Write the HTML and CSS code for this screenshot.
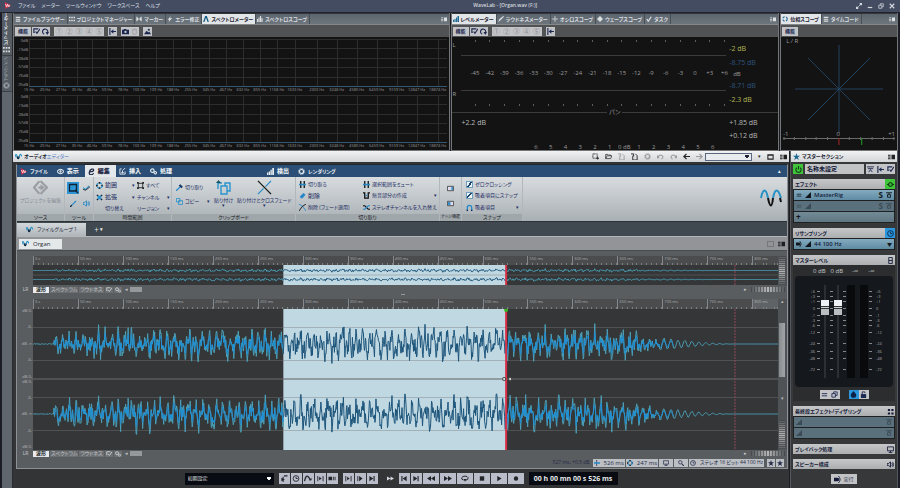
FILE: index.html
```html
<!DOCTYPE html>
<html lang="ja">
<head>
    <meta charset="utf-8">
    <meta name="viewport" content="width=device-width, initial-scale=1">
    <title>WaveLab - [Organ.wav (F:)]</title>
    <link rel="stylesheet" href="styles.css">
    <script src="script.js" defer></script>
</head>
<body>
    <!-- アイコン定義 -->
    <svg class="sprite" aria-hidden="true">
        <symbol id="logo" viewBox="0 0 10 10"><path d="M1 0l9 5-8 5z" fill="#d22f4a"/><path d="M2 3l2 4 1-4 2 4 1-3" fill="none" stroke="#fff"/></symbol>
        <symbol id="wave" viewBox="0 0 10 8"><path d="M0 5C1 0 2 0 3 4s2 4 3 0 2-4 4 0" fill="none" stroke="#2791c4" stroke-width="1.6"/><path d="M3 4c1 4 2 4 3 0" fill="none" stroke="#123" stroke-width="1.6"/></symbol>
        <symbol id="list" viewBox="0 0 8 8"><path d="M1 1h6v1.500H1zM1 3.500h6V5H1zM1 6h6v1.500H1z" fill="currentColor"/></symbol>
        <symbol id="grid" viewBox="0 0 8 8"><path d="M0 1h2v2H0zM3 1h2v2H3zM6 1h2v2H6zM0 5h2v2H0zM3 5h2v2H3zM6 5h2v2H6z" fill="currentColor"/></symbol>
        <symbol id="menu" viewBox="0 0 8 8"><path d="M0 2h3v1H0zM0 4h3v1H0zM0 6h3v1H0zM4 2h4v5H4z" fill="currentColor"/></symbol>
        <symbol id="marker" viewBox="0 0 8 8"><path d="M1 1v6M7 1v6" stroke="currentColor"/><path d="M1 1l3 3-3 3zM7 1L4 4l3 3z" fill="currentColor"/></symbol>
        <symbol id="bolt" viewBox="0 0 8 8"><path d="M5 0L1 5h2L2 8l5-5H4z" fill="currentColor"/></symbol>
        <symbol id="peak" viewBox="0 0 8 8"><path d="M1 8L3.500 1h1L7 8" fill="none" stroke="#145c84" stroke-width="1.700"/></symbol>
        <symbol id="bars" viewBox="0 0 8 8"><path d="M0 5h1.500v3H0zM2 4h1.500v4H2zM4 2h1.500v6H4zM6 0h2v8H6z" fill="currentColor"/></symbol>
        <symbol id="bars2" viewBox="0 0 8 8"><path d="M0 4h1.500v4H0zM2 2h1.500v6H2zM4 0h1.500v8H4zM6 3h1.500v5H6z" fill="currentColor"/></symbol>
        <symbol id="brush" viewBox="0 0 8 8"><path d="M0 8l2-4 5-4 1 1-5 5z" fill="currentColor"/></symbol>
        <symbol id="target" viewBox="0 0 8 8"><circle cx="4" cy="4" r="3" fill="none" stroke="currentColor" stroke-width="1.500" stroke-dasharray="3 1.700"/></symbol>
        <symbol id="osc" viewBox="0 0 8 8"><path d="M4 0l1.300 2H2.700zM4 8l1.300-2H2.700zM0 4l2-1.300v2.600zM8 4L6 2.700v2.600zM3 3h2v2H3z" fill="currentColor"/></symbol>
        <symbol id="dot" viewBox="0 0 8 8"><path d="M0 4l4-4 4 4-4 4z" fill="currentColor"/></symbol>
        <symbol id="check" viewBox="0 0 8 8"><path d="M1 4l2 3 4-6" fill="none" stroke="currentColor" stroke-width="1.700"/></symbol>
        <symbol id="editcheck" viewBox="0 0 8 8"><path d="M6 1H1v4h1M3 4l1.500 2L8 1" fill="none" stroke="currentColor" stroke-width="1.300"/></symbol>
        <symbol id="loop" viewBox="0 0 8 8"><path d="M2.500 7A3 3 0 1 1 6 6" fill="none" stroke="currentColor" stroke-width="1.300"/><path d="M4 4.500h4L6 8z" fill="currentColor"/></symbol>
        <symbol id="into" viewBox="0 0 8 8"><path d="M1 0v8M3 4h5" stroke="currentColor" stroke-width="1.300"/><path d="M2 4l3-2.500v5z" fill="currentColor"/></symbol>
        <symbol id="camera" viewBox="0 0 8 8"><path d="M0 2h2V1h3v1h3v5H0z" fill="currentColor"/><circle cx="4" cy="4.500" r="1.300" fill="#ccc"/></symbol>
        <symbol id="trash" viewBox="0 0 8 8"><path d="M1 2h6M3 1h2M2 2v5h4V2" fill="none" stroke="currentColor"/></symbol>
        <symbol id="scene" viewBox="0 0 8 8"><path d="M0 7l3-4 2 2 1-1 2 3z" fill="currentColor"/><circle cx="5.500" cy="2" r="1.200" fill="currentColor"/></symbol>
        <symbol id="eye" viewBox="0 0 8 8"><path d="M0 4q4-5 8 0-4 5-8 0z" fill="none" stroke="currentColor" stroke-width="1.200"/><circle cx="4" cy="4" r="1.300" fill="currentColor"/></symbol>
        <symbol id="edit" viewBox="0 0 8 8"><path d="M6.500 2.500C6.500 0 2 1 1.500 5S5 8 6.500 6M2 4.500q4 0 4.500-2" fill="none" stroke="currentColor" stroke-width="1.400"/></symbol>
        <symbol id="insert" viewBox="0 0 8 8"><path d="M3 1H1v6h6V4M7 0L4 3v3M2.500 4.500L4 6l1.500-1.500" fill="none" stroke="currentColor"/></symbol>
        <symbol id="gears" viewBox="0 0 8 8"><circle cx="2.700" cy="3" r="2" fill="none" stroke="currentColor" stroke-width="1.300"/><circle cx="6" cy="5.500" r="1.400" fill="none" stroke="currentColor" stroke-width="1.200"/></symbol>
        <symbol id="gear" viewBox="0 0 8 8"><circle cx="4" cy="4" r="2.300" fill="none" stroke="currentColor" stroke-width="1.300"/><circle cx="4" cy="4" r="3.500" fill="none" stroke="currentColor" stroke-dasharray="1.300 1.400"/></symbol>
        <symbol id="diamond" viewBox="0 0 14 14"><path d="M6 1L1 7l5 6M7 1l6 6-6 6" fill="none" stroke="#9a9ea2" stroke-width="2"/><path d="M5 6h2V4l4 3-4 3V8H5z" fill="#9a9ea2"/></symbol>
        <symbol id="select" viewBox="0 0 12 12"><path d="M0 0h12v12H0z" fill="#2d95d6"/><path d="M2.500 2.500h7V9h-7zM8 8l3 3" fill="none" stroke="#123" stroke-width="1.300"/></symbol>
        <symbol id="draw" viewBox="0 0 8 8"><path d="M0 3l3 2 4-4" fill="none" stroke="#2791c4" stroke-width="1.200"/><path d="M0 5l3 1 5-4" fill="none" stroke="#223"/></symbol>
        <symbol id="pen" viewBox="0 0 8 8"><path d="M1 7l6-6" stroke="#2589c8" stroke-width="1.500"/><path d="M0 8l2-2" stroke="#123" stroke-width="1.300"/></symbol>
        <symbol id="speaker" viewBox="0 0 8 8"><path d="M0 3h1.500L4 1v6L1.500 5H0zM5.500 2.500q1.300 1.500 0 3M6.500 1.300q2 2.700 0 5.400" fill="none" stroke="currentColor"/></symbol>
        <symbol id="range" viewBox="0 0 8 8"><path d="M4 0v2M4 6v2M0 4h2M6 4h2" stroke="#111" stroke-width="2"/><circle cx="4" cy="4" r="3" fill="none" stroke="#2d95d6" stroke-width="1.500" stroke-dasharray="2.700 2"/></symbol>
        <symbol id="expand" viewBox="0 0 8 8"><path d="M1 1l6 6M7 1L1 7" stroke="#123" stroke-width="1.600"/><path d="M2 2h4v4H2z" fill="#2d95d6"/></symbol>
        <symbol id="all" viewBox="0 0 8 8"><path d="M1.500 1.500h5v5h-5z" fill="none" stroke="#222"/><path d="M0 0h2v2H0zM6 0h2v2H6zM0 6h2v2H0zM6 6h2v2H6z" fill="#222"/></symbol>
        <symbol id="cutpen" viewBox="0 0 8 8"><path d="M0 8l5-5" stroke="#2589c8" stroke-width="1.500"/><path d="M4 1l3 3" stroke="#136" stroke-width="2.400"/></symbol>
        <symbol id="copy" viewBox="0 0 8 8"><path d="M.5.5h4v4h-4zM3 3h4.500v4.500H3z" fill="none" stroke="#2b94c9"/></symbol>
        <symbol id="paste" viewBox="0 0 15 15"><path d="M5 6h6v8H5zM9 6V3h5v8h-3" fill="none" stroke="#2994ce" stroke-width="1.400"/><path d="M2 9V3h4" fill="none" stroke="#2994ce" stroke-width="1.400"/><path d="M0 3l2.500-3L5 3z" fill="#156"/></symbol>
        <symbol id="cross" viewBox="0 0 16 16"><path d="M1 1l14 14" stroke="#111" stroke-width="1.300"/><path d="M15 1L9 7M7 9l-6 6" stroke="#2589c8" stroke-width="1.300"/></symbol>
        <symbol id="trim" viewBox="0 0 8 8"><path d="M2 0v8M6 0v8" stroke="#111" stroke-width="1.500"/><path d="M0 4h8" stroke="#2589c8" stroke-width="1.800"/></symbol>
        <symbol id="erase" viewBox="0 0 8 8"><path d="M1 5l4-4 2.500 2L4 7H2z" fill="#2589c8"/></symbol>
        <symbol id="fade" viewBox="0 0 8 8"><path d="M0 0q5 2 8 8" fill="none" stroke="#2589c8"/><path d="M8 0Q3 2 0 8" fill="none" stroke="#111"/></symbol>
        <symbol id="silence" viewBox="0 0 8 8"><path d="M0 1h2v6h4V1h2" fill="none" stroke="#111" stroke-width="1.500"/><path d="M3 4h2" stroke="#2589c8" stroke-width="1.500"/></symbol>
        <symbol id="swap" viewBox="0 0 8 8"><path d="M0 2h2l4 4h2" fill="none" stroke="#111" stroke-width="1.300"/><path d="M0 6h2l4-4h2" fill="none" stroke="#2589c8" stroke-width="1.300"/></symbol>
        <symbol id="nudger" viewBox="0 0 8 6"><path d="M.5.5h7v5h-7z" fill="#dde" stroke="#444"/><path d="M5 1.500h2v3H5z" fill="#2589c8"/></symbol>
        <symbol id="nudgel" viewBox="0 0 8 6"><path d="M.5.5h7v5h-7z" fill="#dde" stroke="#444"/><path d="M1 1.500h3v3H1z" fill="#2589c8"/></symbol>
        <symbol id="magnet" viewBox="0 0 8 8"><path d="M1.500 8V4a2.500 2.500 0 0 1 5 0v4" fill="none" stroke="#2589c8" stroke-width="1.500"/><path d="M1.500 8V6.500M6.500 8V6.500" stroke="#124" stroke-width="1.500"/></symbol>
        <symbol id="folder" viewBox="0 0 10 8"><path d="M1 7V1h3l1 1h3v1M1 7l2-4h7L8 7z" fill="none" stroke="currentColor"/></symbol>
        <symbol id="newfile" viewBox="0 0 8 8"><path d="M1 1h5v5H1z" fill="none" stroke="currentColor" stroke-dasharray="1 .5"/><path d="M5 6h3M6.500 4.500v3" stroke="currentColor"/></symbol>
        <symbol id="doc" viewBox="0 0 8 8"><path d="M2 3v5h5V3L5 1M0 1h3v3" fill="none" stroke="currentColor"/></symbol>
        <symbol id="undo" viewBox="0 0 8 8"><path d="M1 5q2-4 5-2 2 2-1 4" fill="none" stroke="currentColor" stroke-width="1.200"/><path d="M0 2v4h3z" fill="currentColor"/></symbol>
        <symbol id="redo" viewBox="0 0 8 8"><path d="M7 5Q5 1 2 3 0 5 3 7" fill="none" stroke="currentColor" stroke-width="1.200"/><path d="M8 2v4H5z" fill="currentColor"/></symbol>
        <symbol id="left" viewBox="0 0 8 8"><path d="M8 4H1M4 1L1 4l3 3" fill="none" stroke="currentColor" stroke-width="1.400"/></symbol>
        <symbol id="right" viewBox="0 0 8 8"><path d="M0 4h7M4 1l3 3-3 3" fill="none" stroke="currentColor" stroke-width="1.400"/></symbol>
        <symbol id="window" viewBox="0 0 8 8"><path d="M1 2h6v5H1zM1 2.500h6" fill="none" stroke="currentColor" stroke-width="1.200"/></symbol>
        <symbol id="minimize" viewBox="0 0 8 8"><path d="M1 6h6" stroke="currentColor" stroke-width="1.600"/></symbol>
        <symbol id="restore" viewBox="0 0 8 8"><path d="M1 3h4v4H1zM3 3V1h4v4H5" fill="none" stroke="currentColor"/></symbol>
        <symbol id="close" viewBox="0 0 8 8"><path d="M1 1l6 6M7 1L1 7" stroke="currentColor" stroke-width="1.500"/></symbol>
        <symbol id="full" viewBox="0 0 8 8"><path d="M5 0h3v3H5zM0 5h3v3H0z" fill="currentColor"/><path d="M3 5l2-2" stroke="currentColor"/></symbol>
        <symbol id="star" viewBox="0 0 8 8"><path d="M4 0l1 3h3L5.600 5l1 3L4 6.200 1.400 8l1-3L0 3h3z" fill="currentColor"/></symbol>
        <symbol id="power" viewBox="0 0 8 8"><path d="M4 0v4M2 2a3 3 0 1 0 4 0" fill="none" stroke="currentColor" stroke-width="1.200"/></symbol>
        <symbol id="bypass" viewBox="0 0 8 8"><path d="M0 1h8M2 3.500h4V7H2zM4 1v2" fill="none" stroke="currentColor" stroke-width="1.200"/></symbol>
        <symbol id="merge" viewBox="0 0 8 8"><path d="M0 1h8M1 3h6M2 7l2-3 2 3" fill="none" stroke="currentColor"/></symbol>
        <symbol id="equal" viewBox="0 0 8 8"><path d="M1 3h6M1 5.500h6" stroke="currentColor"/></symbol>
        <symbol id="ramp" viewBox="0 0 8 8"><path d="M0 8l8-8v8z" fill="currentColor"/></symbol>
        <symbol id="node" viewBox="0 0 8 8"><path d="M0 4h2M6 4h2" stroke="currentColor" stroke-width="1.300"/><path d="M3 2h2l1 1v2L5 6H3L2 5V3z" fill="none" stroke="currentColor" stroke-width="1.300"/></symbol>
        <symbol id="clock" viewBox="0 0 8 8"><circle cx="4" cy="4" r="3.300" fill="none" stroke="currentColor"/><path d="M4 2v2h2" fill="none" stroke="currentColor"/></symbol>
        <symbol id="render" viewBox="0 0 8 8"><path d="M0 2h4a2 2 0 0 1 0 4H0z" fill="currentColor"/><path d="M5 0q4 4 0 8M0 4h3" fill="none" stroke="currentColor"/></symbol>
        <symbol id="box" viewBox="0 0 8 8"><path d="M2 .5h4v7H2zM2 4h4" fill="none" stroke="currentColor"/></symbol>
        <symbol id="drop" viewBox="0 0 8 8"><path d="M4 0q5 5 2 7.300-2 1-4 0Q-1 5 4 0z" fill="currentColor"/></symbol>
        <symbol id="lock" viewBox="0 0 8 8"><path d="M1 3.500h6V8H1z" fill="currentColor"/><path d="M2.500 4V1h3v1.500" fill="none" stroke="currentColor"/></symbol>
        <symbol id="monitor" viewBox="0 0 8 8"><path d="M.5 1h7v4.500h-7zM4 5.500V7M2 7.500h4" fill="none" stroke="currentColor"/></symbol>
        <symbol id="squares" viewBox="0 0 8 8"><path d="M1 1h2.500v2.500H1zM5 1h2.500v2.500H5zM1 5h2.500v2.500H1zM5 5h2.500v2.500H5z" fill="currentColor"/></symbol>
        <symbol id="search" viewBox="0 0 8 8"><circle cx="3" cy="3" r="2.300" fill="none" stroke="currentColor"/><path d="M5 5l3 3" stroke="currentColor" stroke-width="1.400"/></symbol>
        <symbol id="caret" viewBox="0 0 8 8"><path d="M3.500 0v8" stroke="currentColor"/><path d="M0 4h8" stroke="#2589c8" stroke-width="2"/></symbol>
        <symbol id="play" viewBox="0 0 8 8"><path d="M2 1l5 3-5 3z" fill="currentColor"/></symbol>
        <symbol id="stop" viewBox="0 0 8 8"><path d="M1.500 1.500h5v5h-5z" fill="currentColor"/></symbol>
        <symbol id="rec" viewBox="0 0 8 8"><circle cx="4" cy="4" r="2.500" fill="currentColor"/></symbol>
        <symbol id="rew" viewBox="0 0 10 8"><path d="M5 1v6L0 4zM10 1v6L5 4z" fill="currentColor"/></symbol>
        <symbol id="fwd" viewBox="0 0 10 8"><path d="M0 1v6l5-3zM5 1v6l5-3z" fill="currentColor"/></symbol>
        <symbol id="prev" viewBox="0 0 8 8"><path d="M7 1v6L2.500 4zM1 1h1.300v6H1z" fill="currentColor"/></symbol>
        <symbol id="next" viewBox="0 0 8 8"><path d="M1 1v6l4.500-3zM5.700 1H7v6H5.700z" fill="currentColor"/></symbol>
        <symbol id="barplay" viewBox="0 0 8 8"><path d="M1 1h1v6H1zM3 2l3 2-3 2zM7 1h1v6H7z" fill="currentColor"/></symbol>
        <symbol id="fromplay" viewBox="0 0 8 8"><path d="M1 1h1v6H1zM3 1l4 3-4 3z" fill="currentColor"/></symbol>
        <symbol id="cycle" viewBox="0 0 10 8"><path d="M3 6Q0 5 1 3q1-2 4-2t4 2q0 3-3 3" fill="none" stroke="currentColor" stroke-width="1.200"/><path d="M3 4.500h4L5 8z" fill="currentColor"/></symbol>
        <symbol id="start" viewBox="0 0 8 8"><path d="M4 1h4M3 2v6" fill="none" stroke="currentColor" stroke-width="1.200"/><path d="M1 3l4 2-4 2z" fill="currentColor"/></symbol>
        <symbol id="arc" viewBox="0 0 8 8"><path d="M0 7q2-9 5-4l2 3" fill="none" stroke="currentColor" stroke-width="1.500"/><path d="M5 6h3V3z" fill="currentColor"/></symbol>
        <symbol id="block" viewBox="0 0 8 8"><path d="M0 2h4v4H0zM5 2h1v4H5zM7 2h1v4H7z" fill="currentColor"/></symbol>
    </svg>

    <header class="titlebar">
        <svg class="icon"><use href="#logo"/></svg>
        <nav class="menubar">
            <a href="#">ファイル</a><a href="#">メーター</a><a href="#">ツールウィンドウ</a><a href="#">ワークスペース</a><a href="#">ヘルプ</a>
        </nav>
        <h1 class="app-title">WaveLab - [Organ.wav (F:)]</h1>
        <div class="window-controls">
            <button aria-label="全画面"><svg class="icon"><use href="#full"/></svg></button>
            <button aria-label="最小化"><svg class="icon"><use href="#minimize"/></svg></button>
            <button aria-label="元に戻す"><svg class="icon"><use href="#restore"/></svg></button>
            <button aria-label="閉じる"><svg class="icon"><use href="#close"/></svg></button>
        </div>
    </header>

    <div class="workspace">
        <aside class="side-tabs">
            <button class="side-tab side-tab-on"><svg class="icon"><use href="#grid"/></svg>ビットメーター</button>
            <button class="side-tab"><svg class="icon"><use href="#gear"/></svg>プラグイン</button>
        </aside>

        <div class="desk">
            <div class="meters">
                <!-- スペクトロメーター -->
                <section class="panel">
                    <div class="tabs">
                        <button class="tab"><svg class="icon"><use href="#list"/></svg>ファイルブラウザー</button>
                        <button class="tab"><svg class="icon"><use href="#grid"/></svg>プロジェクトマネージャー</button>
                        <button class="tab"><svg class="icon"><use href="#marker"/></svg>マーカー</button>
                        <button class="tab"><svg class="icon"><use href="#bolt"/></svg>エラー修正</button>
                        <button class="tab tab-on"><svg class="icon"><use href="#peak"/></svg>スペクトロメーター</button>
                        <button class="tab"><svg class="icon"><use href="#bars2"/></svg>スペクトロスコープ</button>
                        <button class="tab-menu" aria-label="メニュー"><svg class="icon"><use href="#menu"/></svg></button>
                    </div>
                    <div class="toolbar">
                        <button class="func">機能</button>
                        <div class="chips"><button aria-label="設定"><svg class="icon"><use href="#editcheck"/></svg></button><button aria-label="更新"><svg class="icon"><use href="#loop"/></svg></button></div>
                        <div class="chips presets"><button>①</button><button>②</button><button>③</button><button>④</button><button>⑤</button></div>
                        <div class="chips"><button aria-label="リセット"><svg class="icon"><use href="#into"/></svg></button></div>
                        <div class="chips"><button aria-label="スナップショット"><svg class="icon"><use href="#camera"/></svg></button><button class="dim" aria-label="消去"><svg class="icon"><use href="#trash"/></svg></button></div>
                        <div class="chips"><button aria-label="画像"><svg class="icon"><use href="#scene"/></svg></button></div>
                    </div>
                    <div class="screen spectrometer">
                        <div class="spectrum"></div>
                        <div class="spectrum"></div>
                    </div>
                </section>

                <!-- レベルメーター -->
                <section class="panel">
                    <div class="tabs">
                        <button class="tab tab-on"><svg class="icon blue"><use href="#bars"/></svg>レベルメーター</button>
                        <button class="tab"><svg class="icon"><use href="#brush"/></svg>ラウドネスメーター</button>
                        <button class="tab"><svg class="icon"><use href="#osc"/></svg>オシロスコープ</button>
                        <button class="tab"><svg class="icon"><use href="#dot"/></svg>ウェーブスコープ</button>
                        <button class="tab"><svg class="icon"><use href="#check"/></svg>タスク</button>
                        <button class="tab-menu" aria-label="メニュー"><svg class="icon"><use href="#menu"/></svg></button>
                    </div>
                    <div class="toolbar">
                        <button class="func">機能</button>
                        <div class="chips"><button aria-label="設定"><svg class="icon"><use href="#editcheck"/></svg></button><button aria-label="更新"><svg class="icon"><use href="#loop"/></svg></button></div>
                        <div class="chips presets"><button>①</button><button>②</button><button>③</button><button>④</button><button>⑤</button></div>
                        <div class="chips"><button aria-label="リセット"><svg class="icon"><use href="#into"/></svg></button></div>
                    </div>
                    <div class="screen level">
                        <div class="level-main">
                            <div class="level-sides"><span>L</span><span>R</span></div>
                            <div class="level-scale">
                                <div class="dots"></div>
                                <div class="level-numbers"></div>
                                <div class="dots"></div>
                            </div>
                            <div class="level-values">
                                <span class="yellow">-2 dB</span>
                                <span class="navy">-8.75 dB</span>
                                <span class="unit">dB</span>
                                <span class="navy">-8.71 dB</span>
                                <span class="yellow">-2.3 dB</span>
                            </div>
                        </div>
                        <div class="pan-rule"><span>パン</span></div>
                        <div class="pan-values">
                            <span>+2.2 dB</span>
                            <div><span>+1.85 dB</span><span>+0.12 dB</span></div>
                        </div>
                        <div class="pan-numbers"></div>
                    </div>
                </section>

                <!-- 位相スコープ -->
                <section class="panel">
                    <div class="tabs">
                        <button class="tab tab-on"><svg class="icon blue"><use href="#target"/></svg>位相スコープ</button>
                        <button class="tab"><svg class="icon"><use href="#list"/></svg>タイムコード</button>
                        <button class="tab-menu" aria-label="メニュー"><svg class="icon"><use href="#menu"/></svg></button>
                    </div>
                    <div class="toolbar"><button class="func">機能</button></div>
                    <div class="screen phase">
                        <span class="phase-lr">L / R</span>
                        <svg class="phase-plot" viewBox="-45 -45 90 90"><path d="M-44 0h88M0-44v88M-31-31l62 62M31-31l-62 62"/></svg>
                        <div class="phase-numbers"><span>-1</span><span>0</span><span>+1</span></div>
                        <svg class="phase-scale" viewBox="0 0 108 9" preserveAspectRatio="none">
                            <path d="M0 1.500h108M1 0v3M11 0v3M22 0v3M32 0v3M43 0v3M64 0v3M75 0v3M86 0v3M97 0v3M107 0v3" stroke="#6a6a6a"/>
                            <path d="M54 1v7" stroke="#a32626"/><path d="M76 1v7" stroke="#1f9a28"/>
                        </svg>
                    </div>
                </section>
            </div>

            <div class="lower">
                <main class="editor">
                    <div class="pane-title">
                        <svg class="icon"><use href="#wave"/></svg>
                        <h2>オーディオ<span>エディター</span></h2>
                        <div class="quick">
                            <button aria-label="新規"><svg class="icon"><use href="#newfile"/></svg></button>
                            <button aria-label="開く"><svg class="icon"><use href="#folder"/></svg></button>
                            <button class="dim" aria-label="保存"><svg class="icon"><use href="#doc"/></svg></button>
                            <button aria-label="別名で保存"><svg class="icon"><use href="#doc"/></svg></button>
                            <button class="dim" aria-label="情報"><svg class="icon"><use href="#gear"/></svg></button>
                            <button class="dim" aria-label="元に戻す"><svg class="icon"><use href="#undo"/></svg></button>
                            <button class="dim" aria-label="やり直し"><svg class="icon"><use href="#redo"/></svg></button>
                            <button aria-label="戻る"><svg class="icon"><use href="#left"/></svg></button>
                            <button class="dim" aria-label="進む"><svg class="icon"><use href="#right"/></svg></button>
                            <select class="jump" aria-label="ジャンプ先"><option></option></select>
                            <button aria-label="一覧">▾</button>
                            <button aria-label="ウィンドウ"><svg class="icon"><use href="#window"/></svg></button>
                            <button aria-label="メニュー"><svg class="icon"><use href="#menu"/></svg></button>
                        </div>
                    </div>

                    <div class="editor-frame">
                        <div class="ribbon-tabs">
                            <button><svg class="icon"><use href="#logo"/></svg>ファイル</button>
                            <button><svg class="icon"><use href="#eye"/></svg><b>表示</b></button>
                            <button class="ribbon-on"><svg class="icon"><use href="#edit"/></svg><b>編集</b></button>
                            <button><svg class="icon"><use href="#insert"/></svg><b>挿入</b></button>
                            <button><svg class="icon"><use href="#gears"/></svg><b>処理</b></button>
                            <button class="ribbon-gap"><svg class="icon"><use href="#bars"/></svg><b>検出</b></button>
                            <button><svg class="icon"><use href="#gear"/></svg>レンダリング</button>
                            <button class="ribbon-fold" aria-label="リボンを閉じる">▴</button>
                        </div>

                        <div class="ribbon">
                            <div class="group group-source">
                                <div class="group-body"><button class="big dim"><svg class="big-icon"><use href="#diamond"/></svg>プロジェクトを編集</button></div>
                                <div class="group-name">ソース</div>
                            </div>
                            <div class="group group-tools">
                                <div class="group-body tool-grid">
                                    <button aria-label="範囲選択"><svg class="tool-icon"><use href="#select"/></svg></button>
                                    <button aria-label="描画"><svg class="icon"><use href="#draw"/></svg></button>
                                    <button aria-label="ペン"><svg class="icon"><use href="#pen"/></svg></button>
                                    <button class="sky" aria-label="試聴"><svg class="icon"><use href="#speaker"/></svg></button>
                                </div>
                                <div class="group-name">ツール</div>
                            </div>
                            <div class="group group-range">
                                <div class="group-body range-grid">
                                    <button><svg class="icon"><use href="#range"/></svg><b>範囲</b></button><i>▾</i><button><svg class="icon"><use href="#all"/></svg>すべて</button><i></i>
                                    <button><svg class="icon"><use href="#expand"/></svg><b>拡張</b></button><i>▾</i><button>チャンネル</button><i>▾</i>
                                    <button class="indent">切り替え</button><i></i><button>リージョン</button><i>▾</i>
                                </div>
                                <div class="group-name">時間範囲</div>
                            </div>
                            <div class="group group-clip">
                                <div class="group-body clip-row">
                                    <div class="clip-small">
                                        <button><svg class="icon"><use href="#cutpen"/></svg>切り取り</button>
                                        <button><svg class="icon"><use href="#copy"/></svg>コピー<i>▾</i></button>
                                    </div>
                                    <button class="big"><svg class="big-icon"><use href="#paste"/></svg>貼り付け<i>▾</i></button>
                                    <button class="big"><svg class="big-icon"><use href="#cross"/></svg>貼り付けとクロスフェード<i>▾</i></button>
                                </div>
                                <div class="group-name">クリップボード</div>
                            </div>
                            <div class="group group-cut">
                                <div class="group-body cut-grid">
                                    <button><svg class="icon"><use href="#trim"/></svg>切り取る</button><button><svg class="icon"><use href="#trim"/></svg>選択範囲をミュート</button>
                                    <button><svg class="icon"><use href="#erase"/></svg><b>削除</b></button><button><svg class="icon"><use href="#silence"/></svg>無音部分の作成<i>▾</i></button>
                                    <button><svg class="icon"><use href="#fade"/></svg>削除 (フェード適用)</button><button><svg class="icon"><use href="#swap"/></svg>ステレオチャンネルを入れ替え</button>
                                </div>
                                <div class="group-name">切り取り</div>
                            </div>
                            <div class="group group-nudge">
                                <div class="group-body nudge">
                                    <button aria-label="右へナッジ"><svg class="icon"><use href="#nudger"/></svg></button>
                                    <button aria-label="左へナッジ"><svg class="icon"><use href="#nudgel"/></svg></button>
                                </div>
                                <div class="group-name">ナッジ機能</div>
                            </div>
                            <div class="group group-snap">
                                <div class="group-body snap">
                                    <label><input type="checkbox" checked>ゼロクロッシング</label>
                                    <label><input type="checkbox" checked>吸着項目にスナップ</label>
                                    <button><svg class="icon"><use href="#magnet"/></svg>吸着項目<i>▾</i></button>
                                </div>
                                <div class="group-name">スナップ</div>
                            </div>
                            <svg class="brand" viewBox="0 0 22 18"><path d="M1 9C3-1 6-1 8 9M13 9c2-10 5-10 8 0" stroke="#2691c6"/><path d="M8 9c2 10 4 10 5 0M20 9l1 4" stroke="#111"/></svg>
                        </div>

                        <div class="file-groups">
                            <button class="file-group"><svg class="icon"><use href="#wave"/></svg>ファイルグループ 1</button>
                            <button class="add-group">＋ ▾</button>
                        </div>
                        <div class="file-tabs">
                            <button class="file-tab"><svg class="icon"><use href="#wave"/></svg>Organ</button>
                            <span class="empty-box"></span>
                            <button aria-label="メニュー"><svg class="icon"><use href="#menu"/></svg></button>
                        </div>

                        <div class="montage">
                            <!-- 全体表示 -->
                            <div class="view overview">
                                <div></div>
                                <div class="track">
                                    <div class="ruler"></div>
                                    <svg class="waves" id="overview-wave" viewBox="0 0 744 20" preserveAspectRatio="none"></svg>
                                </div>
                                <div class="vscroll"><span class="wheel"></span></div>
                            </div>
                            <div class="view-tabs">
                                <span>LR</span><button class="view-on">波形</button><button>スペクトラム</button><button>ラウドネス</button><button aria-label="設定"><svg class="icon"><use href="#editcheck"/></svg></button><button aria-label="同期"><svg class="icon"><use href="#gears"/></svg></button><span class="hscroll">◂<span class="hthumb"></span></span><span>▸</span><span class="wheel-h"></span>
                            </div>
                            <div class="splitter"><span></span></div>
                            <!-- メイン表示 -->
                            <div class="view mainview">
                                <div class="db-labels">
                                    <div><span>dB 0-</span><span>-6-</span><span>dB -∞</span><span>-6-</span><span>dB 0-</span></div>
                                    <div><span>dB 0-</span><span>-6-</span><span>dB -∞</span><span>-6-</span><span>dB 0-</span></div>
                                </div>
                                <div class="track">
                                    <div class="ruler ruler-main"></div>
                                    <svg class="waves" id="main-wave" viewBox="0 0 744 141" preserveAspectRatio="none"></svg>
                                </div>
                                <div class="vscroll"><span>▴</span><span class="vthumb"></span><span>▾</span><span class="wheel"></span></div>
                            </div>
                            <div class="view-tabs">
                                <span>LR</span><button class="view-on">波形</button><button>スペクトラム</button><button>ラウドネス</button><button aria-label="設定"><svg class="icon"><use href="#editcheck"/></svg></button><button aria-label="同期"><svg class="icon"><use href="#gears"/></svg></button><span class="hscroll">◂<span class="hthumb"></span></span><span>▸</span><span class="wheel-h"></span>
                            </div>
                            <div class="status">
                                <span class="status-pos">527 ms, +0.5 dB</span>
                                <div class="status-chips">
                                    <button><svg class="icon"><use href="#caret"/></svg>526 ms</button>
                                    <button><svg class="icon"><use href="#range"/></svg>247 ms</button>
                                    <button class="status-wide" aria-label="表示"><svg class="icon"><use href="#monitor"/></svg></button>
                                    <button class="status-wide" aria-label="ズーム"><svg class="icon"><use href="#search"/></svg></button>
                                    <button class="status-format"><svg class="icon"><use href="#clock"/></svg>ステレオ 16 ビット 44 100 Hz</button>
                                </div>
                                <div class="status-chips"><button aria-label="お気に入りに追加"><svg class="icon"><use href="#star"/></svg></button><button aria-label="お気に入り"><svg class="icon"><use href="#star"/></svg></button></div>
                            </div>
                        </div>
                    </div>

                    <!-- トランスポートバー -->
                    <footer class="transport">
                        <select class="preset" aria-label="プリセット"><option>初期設定</option></select>
                        <div class="keys">
                            <button aria-label="開始位置"><svg class="icon"><use href="#start"/></svg></button><button aria-label="プリロール"><svg class="icon"><use href="#clock"/></svg></button><button aria-label="スキップ"><svg class="icon"><use href="#arc"/></svg></button><button aria-label="範囲再生"><svg class="icon"><use href="#barplay"/></svg></button><button aria-label="停止位置"><svg class="icon"><use href="#block"/></svg></button>
                        </div>
                        <div class="keys">
                            <button aria-label="範囲"><svg class="icon"><use href="#barplay"/></svg></button><button aria-label="先頭から"><svg class="icon"><use href="#fromplay"/></svg></button><button aria-label="末尾まで"><svg class="icon"><use href="#next"/></svg></button>
                        </div>
                        <svg class="icon speed"><use href="#fwd"/></svg>
                        <div class="keys">
                            <button aria-label="先頭"><svg class="icon"><use href="#prev"/></svg></button><button aria-label="末尾"><svg class="icon"><use href="#next"/></svg></button><button class="wide" aria-label="巻き戻し"><svg class="icon"><use href="#rew"/></svg></button><button class="wide" aria-label="早送り"><svg class="icon"><use href="#fwd"/></svg></button><button class="wide" aria-label="ループ"><svg class="icon"><use href="#cycle"/></svg></button><button class="wide" aria-label="停止"><svg class="icon"><use href="#stop"/></svg></button><button class="wide" aria-label="再生"><svg class="icon"><use href="#play"/></svg></button><button class="wide" aria-label="録音"><svg class="icon"><use href="#rec"/></svg></button>
                        </div>
                        <output class="time">00 h 00 mn 00 s 526 ms</output>
                    </footer>
                </main>

                <!-- マスターセクション -->
                <section class="master">
                    <div class="pane-title">
                        <svg class="icon blue"><use href="#star"/></svg>
                        <h2>マスターセクション</h2>
                        <div class="quick"><button aria-label="メニュー"><svg class="icon"><use href="#menu"/></svg></button></div>
                    </div>
                    <div class="master-body">
                        <div class="master-top">
                            <button class="green" aria-label="電源"><svg class="icon"><use href="#power"/></svg></button>
                            <button class="preset-name">名称未設定</button>
                            <div class="chips"><button aria-label="統合"><svg class="icon"><use href="#merge"/></svg></button><button aria-label="リセット"><svg class="icon"><use href="#into"/></svg></button><button aria-label="設定"><svg class="icon"><use href="#editcheck"/></svg></button></div>
                        </div>
                        <div class="block">
                            <div class="head"><h3>エフェクト</h3><button class="green" aria-label="エフェクト"><svg class="icon"><use href="#node"/></svg></button></div>
                            <div class="slots">
                                <button class="slot slot-on"><svg class="icon"><use href="#equal"/></svg><svg class="icon"><use href="#ramp"/></svg><span>MasterRig</span><b>S</b><svg class="icon"><use href="#bypass"/></svg></button>
                                <button class="slot slot-off"><svg class="icon"><use href="#equal"/></svg><svg class="icon"><use href="#ramp"/></svg><span></span><b>S</b><svg class="icon"><use href="#bypass"/></svg></button>
                                <button class="slot"><b>+</b></button>
                            </div>
                        </div>
                        <div class="block">
                            <div class="head"><h3>リサンプリング</h3><button class="cyan" aria-label="リサンプリング"><svg class="icon"><use href="#clock"/></svg></button></div>
                            <div class="slots"><button class="slot slot-on"><svg class="icon"><use href="#render"/></svg><svg class="icon"><use href="#ramp"/></svg><span>44 100 Hz</span><i>▼</i></button></div>
                        </div>
                        <div class="block">
                            <div class="head"><h3>マスターレベル</h3><button aria-label="表示切替"><svg class="icon"><use href="#box"/></svg></button></div>
                            <div class="levels">
                                <div class="level-read"><span>0 dB</span><span>0 dB</span><span>-∞</span><span>-∞</span></div>
                                <div class="faders">
                                    <svg class="fader-scale" id="fader-scale" viewBox="0 0 98 111"></svg>
                                    <input class="fader fader-l" type="range" value="81" aria-label="左レベル">
                                    <input class="fader fader-r" type="range" value="81" aria-label="右レベル">
                                </div>
                                <div class="level-buttons">
                                    <div class="chips"><button aria-label="均等"><svg class="icon"><use href="#equal"/></svg></button><button aria-label="モノ"><svg class="icon"><use href="#restore"/></svg></button></div>
                                    <div class="chips"><button class="cyan" aria-label="リンク"><svg class="icon"><use href="#drop"/></svg></button><button aria-label="ロック"><svg class="icon"><use href="#lock"/></svg></button></div>
                                </div>
                            </div>
                        </div>
                        <div class="block">
                            <div class="head"><h3>最終段エフェクト/ディザリング</h3><button aria-label="一覧"><svg class="icon"><use href="#squares"/></svg></button></div>
                            <div class="slots">
                                <button class="slot slot-off"><svg class="icon"><use href="#ramp"/></svg><span></span><svg class="icon"><use href="#bypass"/></svg></button>
                                <button class="slot slot-off"><svg class="icon"><use href="#ramp"/></svg><span></span><svg class="icon"><use href="#bypass"/></svg></button>
                            </div>
                        </div>
                        <div class="head"><h3>プレイバック処理</h3><button aria-label="プレイバック"><svg class="icon"><use href="#monitor"/></svg></button></div>
                        <div class="head"><h3>スピーカー構成</h3><button aria-label="スピーカー"><svg class="icon"><use href="#speaker"/></svg></button></div>
                        <button class="run"><svg class="icon"><use href="#render"/></svg>実行</button>
                    </div>
                </section>
            </div>
        </div>
    </div>
</body>
</html>
```
FILE: styles.css
```css
* {
    box-sizing: border-box;
}

body {
    margin: 0;
    min-height: 100vh;
    display: flex;
    flex-direction: column;
    background: #1b1c26;
    color: #d4d8de;
    font-family: "Open Sans", "Noto Sans CJK JP", sans-serif;
    font-size: 5px;
    line-height: 1;
    font-feature-settings: "palt";
}

h1, h2, h3 {
    margin: 0;
    font-size: inherit;
}

button {
    display: flex;
    align-items: center;
    justify-content: center;
    gap: 2px;
    padding: 0;
    border: 0;
    background: none;
    color: inherit;
    font: inherit;
    font-feature-settings: inherit;
    line-height: 1;
    white-space: nowrap;
}

i {
    font-style: normal;
}

.sprite {
    position: absolute;
    width: 0;
    height: 0;
}

.icon {
    flex: none;
    display: block;
    width: 7px;
    height: 7px;
}

.blue {
    color: #216a93;
}

.dim {
    color: #9a9ca0;
}

.sky {
    color: #2589c8;
}

/* タイトルバー */
.titlebar {
    display: grid;
    grid-template-columns: 14px 453fr auto 356fr;
    align-items: center;
    height: 13px;
    padding: 0 5px 1px 4px;
    background: #444c62;
    border-bottom: 1px solid #20222c;
}

.menubar {
    display: flex;
    gap: 6px;
}

.menubar a {
    color: #dde1ea;
    text-decoration: none;
}

.app-title {
    font-weight: 600;
    white-space: nowrap;
}

.window-controls {
    display: flex;
    justify-content: flex-end;
    gap: 5px;
}

.window-controls .icon {
    width: 6px;
    height: 6px;
}

/* 全体の配置 */
.workspace {
    flex: 1;
    display: flex;
    padding: 0 2px 1px;
}

.side-tabs {
    width: 11px;
    background: #5f666e;
    border-right: 1px solid #2a2b2e;
}

.side-tab {
    width: 100%;
    height: 36px;
    border-top: 1px solid #3d4248;
    writing-mode: vertical-rl;
    transform: rotate(180deg);
    justify-content: flex-start;
    gap: 1px;
    padding: 2px 0;
    color: #9aa1a8;
    background: #555c64;
    font-feature-settings: "vpal";
}

.side-tab-on {
    height: 43px;
    color: #d8dce0;
    font-weight: 700;
}

.desk {
    flex: 1;
    min-width: 0;
    display: flex;
    flex-direction: column;
    gap: 1px;
}

.meters {
    display: grid;
    grid-template-columns: 437fr 329fr 118fr;
    gap: 1px;
    height: 137px;
}

.panel {
    display: flex;
    flex-direction: column;
    min-width: 0;
    border: 1px solid #737577;
    border-top: 0;
    background: #505254;
}

.tabs {
    display: flex;
    height: 12px;
    background: linear-gradient(#5d666f, #6d757c);
    border-top: 1px solid #33363b;
    border-bottom: 1px solid #85888a;
}

.tab {
    gap: 2px;
    padding: 0 2px 0 1px;
    border-right: 1px solid #484f57;
    color: #dcdfe1;
    font-weight: 700;
}

.tab .icon {
    width: 6px;
    height: 6px;
}

.tab-on {
    background: #e2e5e7;
    color: #1b2130;
}

.tab-menu {
    margin-left: auto;
    padding-right: 2px;
    color: #dde0e2;
}

.tab-menu .icon {
    width: 6px;
    height: 6px;
}

.toolbar {
    display: flex;
    align-items: center;
    gap: 4px;
    height: 12px;
    padding: 0 1px;
}

.func, .chips {
    height: 9px;
    background: #c3c4c7;
    color: #1d2850;
}

.func {
    width: 16px;
    margin-right: -3px;
    font-weight: 700;
}

.chips {
    display: flex;
}

.chips button {
    width: 9px;
}

.chips .dim {
    color: #9a9ca0;
}

.presets button {
    width: 10px;
    color: #85878c;
    font-size: 7px;
}

.screen {
    flex: 1;
    background: #131313;
    color: #9c9c9c;
}

/* スペクトロメーター */
.spectrometer {
    display: flex;
    flex-direction: column;
    gap: 1px;
    padding: 2px 2px 0;
    font-size: 4px;
}

.spectrum {
    display: grid;
    grid-template-columns: 13px 1fr;
    grid-template-rows: 48px 6px;
    row-gap: 1px;
}

.spectrum-db {
    display: flex;
    flex-direction: column;
    justify-content: space-between;
    align-items: flex-end;
    padding-right: 1px;
}

.freq-grid, .freq-labels {
    display: grid;
    grid-template-columns: 16fr 16fr 16fr 15fr 15fr 16fr 16fr 17fr 17fr 18fr 18fr 17fr 17fr 17fr 17fr 18fr 22fr 20fr 20fr 20fr 20fr 20fr 21fr 9fr;
}

.freq-grid {
    border-bottom: 1px solid #355670;
    background: repeating-linear-gradient(#2d2d2d 0 1px, transparent 1px 20%);
}

.freq-grid span {
    border-left: 1px solid #2d2d2d;
}

.freq-labels {
    grid-column: 2;
}

.freq-labels span {
    display: flex;
    justify-content: center;
    width: 0;
    white-space: nowrap;
}

/* レベルメーター */
.level {
    display: flex;
    flex-direction: column;
    font-size: 6px;
}

.level-main {
    display: flex;
    height: 72px;
}

.level-sides {
    width: 9px;
    display: flex;
    flex-direction: column;
    gap: 43px;
    padding: 5px 0 0 1px;
}

.level-scale {
    flex: 1;
    display: flex;
    flex-direction: column;
}

.dots {
    height: 18px;
    padding: 3px 1px 3px 14px;
    display: flex;
    justify-content: space-between;
}

.dots span {
    width: 1px;
    height: 2px;
    background: #5e5e5e;
}

.dots:last-child {
    align-items: flex-end;
}

.level-numbers {
    flex: 1;
    display: flex;
    justify-content: space-between;
    align-items: center;
    padding: 0 1px 0 14px;
    border: solid #3b3b3b;
    border-width: 1px 0;
}

.level-numbers span {
    display: flex;
    justify-content: center;
    width: 1px;
}

.level-values {
    width: 52px;
    display: flex;
    flex-direction: column;
    padding: 8px 0 0 3px;
    gap: 7px;
    font-size: 7px;
}

.level-values .unit {
    height: 2px;
    line-height: 2px;
    padding-left: 4px;
    font-size: 6px;
}

.yellow {
    color: #b2b452;
}

.navy {
    color: #2b547e;
}

.pan-rule {
    display: flex;
    align-items: center;
    gap: 2px;
}

.pan-rule::before, .pan-rule::after {
    content: "";
    flex: 1;
    height: 1px;
    background: #3b3b3b;
}

.pan-values {
    flex: 1;
    display: flex;
    justify-content: space-between;
    padding: 4px 0 0 10px;
    color: #b8b8b8;
    font-size: 7px;
}

.pan-values div {
    width: 49px;
    display: flex;
    flex-direction: column;
    gap: 6px;
}

.pan-numbers {
    display: flex;
    justify-content: space-between;
    padding: 0 65px 0 84px;
}

.pan-numbers span {
    display: flex;
    justify-content: center;
    width: 1px;
    white-space: nowrap;
}

/* 位相スコープ */
.phase {
    display: flex;
    flex-direction: column;
    padding: 1px 2px 0;
    font-size: 6px;
}

.phase-lr {
    padding-left: 3px;
}

.phase-plot {
    align-self: center;
    width: 90px;
    height: 90px;
}

.phase-plot path {
    stroke: #234360;
    fill: none;
}

.phase-numbers {
    display: flex;
    justify-content: space-between;
    margin-top: -3px;
}

.phase-scale {
    width: 100%;
    height: 9px;
}

/* 下段 */
.lower {
    flex: 1;
    display: grid;
    grid-template-columns: 776fr 108fr;
    gap: 1px;
}

.pane-title {
    display: flex;
    align-items: center;
    gap: 2px;
    height: 11px;
    padding: 0 2px;
    background: linear-gradient(#f0f2f3, #d3d6d8);
    color: #1d2433;
}

.pane-title h2 span {
    color: #4a77c4;
    font-weight: 400;
}

.quick {
    display: flex;
    align-items: center;
    gap: 6px;
    margin-left: auto;
    color: #222;
}

.jump {
    appearance: none;
    width: 47px;
    height: 8px;
    margin-left: -4px;
    padding: 0;
    border: 1px solid #5a6880;
    background: conic-gradient(from -35deg at 50% 100%, #223 70deg, transparent 0) 39px 1px / 4px 4px no-repeat, #e9ecee;
}

/* エディター */
.editor {
    display: flex;
    flex-direction: column;
    min-width: 0;
    background: #333436;
}

.editor-frame {
    flex: 1;
    display: flex;
    flex-direction: column;
    margin: 2px 1px 1px 3px;
    border: 1px solid #8d9094;
    border-top-color: #24272c;
    background: #5a5d60;
}

.ribbon-tabs {
    display: flex;
    height: 12px;
    background: #2a4e76;
    color: #e8edf1;
}

.ribbon-tabs button {
    padding: 0 6px 0 3px;
    gap: 3px;
    font-weight: 700;
}

.ribbon-tabs b, .range-grid b, .cut-grid b {
    font-size: 6px;
}

.ribbon-tabs .ribbon-on {
    background: #e4e8ea;
    color: #1c2444;
}

.ribbon-tabs .ribbon-gap {
    margin-left: 86px;
}

.ribbon-tabs .ribbon-fold {
    margin-left: auto;
}

.ribbon {
    display: flex;
    height: 45px;
    background: linear-gradient(#d8dcdf, #a9b0b4);
    border-bottom: 1px solid #2e3338;
    color: #222d62;
}

.ribbon .dim {
    color: #888d94;
}

.group {
    display: flex;
    flex-direction: column;
    border-right: 1px solid #b1b7bb;
}

.group-body {
    flex: 1;
}

.group-name {
    display: flex;
    justify-content: center;
    height: 7px;
    padding-top: 1px;
    overflow: hidden;
    white-space: nowrap;
    color: #14171d;
    background: #a0a7ab;
}

.group-nudge .group-name {
    font-size: 4px;
}

.group-source { width: 48px; }
.group-tools { width: 29px; }
.group-range { width: 78px; }
.group-clip { width: 124px; }
.group-cut { width: 144px; }
.group-nudge { width: 22px; }
.group-snap { width: 61px; }

.group b {
    font-weight: 400;
}

.big {
    flex-direction: column;
    justify-content: flex-start;
    gap: 3px;
    padding-top: 3px;
}

.group-source .big {
    width: 100%;
}

.big i {
    margin-top: -3px;
}

.big-icon {
    width: 15px;
    height: 15px;
}

.tool-grid {
    display: grid;
    grid-template-columns: 14px 12px;
    grid-template-rows: 16px 14px;
    padding: 3px 1px;
}

.tool-icon {
    width: 12px;
    height: 12px;
}

.range-grid {
    display: grid;
    grid-template-columns: 36px 5px 30px 4px;
    align-items: center;
    padding: 2px 1px 1px 2px;
}

.range-grid button, .cut-grid button, .snap button, .clip-small button {
    justify-content: flex-start;
}

.range-grid .indent {
    padding-left: 9px;
}

.clip-row {
    display: flex;
    gap: 4px;
}

.clip-small {
    display: flex;
    flex-direction: column;
    gap: 7px;
    width: 38px;
    padding: 7px 0 0 4px;
}

.clip-small i, .cut-grid i, .snap i {
    margin-left: auto;
}

.cut-grid {
    display: grid;
    grid-template-columns: 64px 1fr;
    padding: 2px 3px 1px;
}

.nudge {
    display: flex;
    flex-direction: column;
    justify-content: center;
    align-items: center;
    gap: 8px;
}

.snap {
    display: grid;
    padding: 2px 3px 1px 4px;
}

.snap label {
    display: flex;
    align-items: center;
    gap: 2px;
}

.snap input {
    appearance: none;
    width: 7px;
    height: 7px;
    margin: 0;
    border: 1px solid #6c9fbe;
    background: linear-gradient(135deg, transparent 40%, #17406c 40% 60%, transparent 60%), #eef3f6;
}

.brand {
    width: 22px;
    height: 18px;
    margin: 12px 5px 0 auto;
    fill: none;
    stroke-width: 2;
}

.file-groups {
    display: flex;
    height: 15px;
    padding-top: 1px;
    background: #404950;
    border-bottom: 1px solid #b5b8bb;
}

.file-group {
    width: 69px;
    gap: 4px;
    background: linear-gradient(#d2d7da, #b0b6ba);
    color: #1f2836;
}

.add-group {
    margin-left: 8px;
    color: #e0e3e5;
    font-weight: 700;
}

.file-tabs {
    display: flex;
    align-items: center;
    height: 14px;
    padding: 0 2px;
    gap: 4px;
    background: #929498;
    border-bottom: 1px solid #494c4f;
    color: #1b1d22;
}

.file-tab {
    width: 43px;
    height: 10px;
    justify-content: flex-start;
    gap: 4px;
    padding-left: 3px;
    background: #e4e8e9;
    color: #1f2836;
    font-size: 6px;
}

.empty-box {
    width: 7px;
    height: 6px;
    margin-left: auto;
    border: 1px solid #75777b;
}

.montage {
    flex: 1;
    display: flex;
    flex-direction: column;
    padding-left: 2px;
}

.view {
    display: grid;
    grid-template-columns: 14px 1fr 9px;
}

.overview {
    padding-top: 5px;
}

.track {
    display: flex;
    flex-direction: column;
    min-width: 0;
}

.ruler {
    display: flex;
    height: 9px;
    background: #4a4c4e;
    color: #adafb1;
    font-size: 4px;
}

.ruler span {
    flex: 9 0 0;
    min-width: 0;
    padding: 1px 0 0 1px;
    border-left: 1px solid #85878a;
    background: repeating-linear-gradient(90deg, transparent 0 9%, #7c7e80 9% 11%) bottom / 100% 2px no-repeat;
}

.ruler span:last-child {
    flex-grow: 5;
}

.ruler-main {
    height: 10px;
}

.ruler-main span:last-child {
    background-color: #606366;
}

.waves {
    display: block;
    width: 100%;
    height: 141px;
    background: #353638;
}

.overview .waves {
    height: 20px;
}

.waves path, .waves line {
    fill: none;
    vector-effect: non-scaling-stroke;
}

.selection {
    fill: #c0d8e2;
}

.guide {
    stroke: #77797b;
    stroke-opacity: .4;
}

.lane {
    stroke: #505153;
    stroke-width: 2;
}

.lane-sel {
    stroke: #8f9da3;
}

.wave {
    stroke: #4b9fb6;
    stroke-width: 1;
}

.wave-body {
    stroke: #2090d4;
    stroke-width: 1;
}

.wave-sel {
    stroke: #1d557b;
    stroke-width: 1;
}

.cursor {
    stroke: #d82f48;
    stroke-width: 2;
}

.file-end {
    stroke: #934a5a;
    stroke-dasharray: 2 1;
}

.cursor-cap {
    fill: #35b41c;
}

.handle {
    fill: #f2f4f5;
    stroke: #444;
}

.db-labels {
    display: flex;
    flex-direction: column;
    gap: 1px;
    padding: 10px 1px 1px 0;
    color: #b4b6b9;
    font-size: 4px;
    text-align: right;
    white-space: nowrap;
}

.db-labels div {
    flex: 1;
    display: flex;
    flex-direction: column;
    justify-content: space-between;
}

.vscroll {
    display: flex;
    flex-direction: column;
    align-items: center;
    justify-content: space-between;
    padding: 0 2px 0 1px;
    background: #505356;
    color: #b7b9bb;
}

.vthumb {
    width: 100%;
    height: 54px;
    background: linear-gradient(90deg, #888c8f, #a3a6a9);
}

.wheel {
    width: 100%;
    height: 30px;
    background: repeating-linear-gradient(rgba(60, 62, 64, .6) 0 1px, transparent 1px 2px), linear-gradient(#55585b, #b4b6b8, #55585b);
}

.view-tabs {
    display: flex;
    align-items: center;
    gap: 1px;
    height: 7px;
    color: #c3c6c9;
}

.view-tabs > span:first-child {
    width: 13px;
    text-align: center;
}

.view-tabs button {
    height: 6px;
    padding: 0 1px;
    background: #6c6f72;
}

.view-tabs .icon {
    width: 6px;
    height: 6px;
}

.view-tabs .view-on {
    width: 16px;
    background: #e8eaeb;
    color: #22252a;
    font-weight: 700;
}

.hscroll {
    flex: 1;
    display: flex;
    align-items: center;
    gap: 2px;
    padding-left: 2px;
}

.hthumb {
    width: 12px;
    height: 5px;
    background: #96999c;
}

.wheel-h {
    width: 34px;
    height: 5px;
    margin: 0 2px 0 3px;
    background: repeating-linear-gradient(90deg, rgba(60, 62, 64, .6) 0 1px, transparent 1px 3px), linear-gradient(90deg, #55585b, #b4b6b8, #55585b);
}

.splitter {
    display: flex;
    justify-content: center;
    height: 6px;
    padding-top: 1px;
}

.splitter span {
    width: 4px;
    height: 1px;
    background: #96989a;
}

.status {
    display: flex;
    align-items: center;
    justify-content: flex-end;
    gap: 3px;
    height: 11px;
    padding-right: 3px;
}

.status-pos {
    color: #222b49;
    font-size: 5px;
}

.status-chips {
    display: flex;
    gap: 1px;
    height: 8px;
    color: #262d4a;
}

.status-chips button {
    min-width: 8px;
    padding: 0 1px;
    gap: 4px;
    background: #bcbfc4;
    font-size: 6px;
}

.status-chips .icon {
    width: 6px;
    height: 6px;
}

.status-chips .status-wide {
    width: 14px;
}

.status-chips .status-format {
    font-size: 5px;
}

/* トランスポート */
.transport {
    display: flex;
    align-items: center;
    justify-content: center;
    gap: 5px;
    height: 20px;
    padding: 0 0 2px;
    border-bottom: 1px solid #707275;
}

.preset {
    appearance: none;
    width: 89px;
    height: 12px;
    padding: 0 3px;
    border: 0;
    background: conic-gradient(from -35deg at 50% 100%, #fff 70deg, transparent 0) 82px 4px / 4px 4px no-repeat, #080c12;
    color: #e2e5e8;
    font: inherit;
}

.keys {
    display: flex;
    gap: 1px;
    height: 11px;
}

.keys button {
    width: 11px;
    background: #b9bdc9;
    color: #22242a;
}

.keys .wide {
    width: 16px;
}

.keys .icon {
    width: 8px;
}

.speed {
    margin-left: 4px;
}

.time {
    width: 89px;
    height: 13px;
    padding-top: 3px;
    background: #080c12;
    color: #e6e8ea;
    font-size: 7px;
    font-weight: 700;
    text-align: center;
    white-space: nowrap;
}

/* マスターセクション */
.master {
    min-width: 0;
    border: 1px solid #55585b;
    border-top: 0;
    background: #36383a;
}

.master-body {
    display: flex;
    flex-direction: column;
    gap: 5px;
    padding: 2px 2px;
    color: #141a38;
}

.master-top {
    display: flex;
    gap: 2px;
    height: 10px;
}

.master-top .chips {
    height: 10px;
    gap: 1px;
}

.green {
    width: 10px;
    background: #3fc43a;
    color: #0f3a12;
}

.cyan {
    background: #2a97dc;
    color: #0b2148;
}

.preset-name {
    flex: 1;
    justify-content: flex-start;
    padding-left: 2px;
    background: #c2c3c5;
    font-size: 6px;
    font-weight: 700;
}

.block {
    display: flex;
    flex-direction: column;
}

.head {
    display: flex;
    justify-content: space-between;
    height: 10px;
    background: linear-gradient(#c6c7c8, #adaeb0);
}

.head h3 {
    align-self: center;
    padding-left: 2px;
}

.head button {
    width: 10px;
}

.slots {
    display: flex;
    flex-direction: column;
    gap: 1px;
    padding: 1px;
    background: #1e2022;
}

.slot {
    height: 10px;
    justify-content: flex-start;
    gap: 3px;
    padding: 0 2px;
    background: linear-gradient(#738a97, #5f7683);
    color: #10161c;
}

.slot .icon {
    width: 6px;
    height: 6px;
}

.slot span {
    flex: 1;
    text-align: left;
    font-size: 6px;
    font-weight: 600;
    color: #16233c;
}

.slot b {
    font-size: 8px;
}

.slot-on {
    background: linear-gradient(#84abc0, #5f8ba3);
}

.slot-off {
    background: #5a707c;
    color: #3b4b55;
}

.levels {
    padding: 3px 2px 2px;
    background: #2b2d2f;
}

.level-read {
    display: flex;
    gap: 5px;
    height: 8px;
    padding-left: 18px;
    color: #c6c8ca;
    font-size: 6px;
}

.level-read span:nth-child(2) {
    margin-right: 4px;
}

.level-read span:nth-child(3) {
    margin-right: 5px;
}

.faders {
    position: relative;
    width: 98px;
    margin: 0 auto;
    border-radius: 4px;
    background: #15181c;
}

.fader-scale {
    display: block;
    width: 98px;
    height: 111px;
    font-size: 4px;
    fill: #a8aaac;
    stroke: none;
}

.fader-scale path {
    stroke: #85878a;
}

.fader-scale .meter {
    fill: #090a0b;
}

.fader-scale .slit {
    fill: #2c2f33;
}

.fader {
    position: absolute;
    top: 9px;
    appearance: none;
    writing-mode: vertical-lr;
    direction: rtl;
    width: 8px;
    height: 93px;
    margin: 0;
    background: none;
}

.fader-l {
    left: 26px;
}

.fader-r {
    left: 39px;
}

.fader::-webkit-slider-thumb {
    appearance: none;
    width: 8px;
    height: 15px;
    background: linear-gradient(#eef2f4 40%, #333 40% 47%, #cdd3d7 47% 54%, #333 54% 60%, #b8bec2 60%);
}

.level-buttons {
    display: flex;
    justify-content: center;
    gap: 9px;
    padding: 3px 0 0;
}

.level-buttons .chips button {
    width: 10px;
}

.run {
    align-self: center;
    width: 26px;
    height: 10px;
    background: #c2c3c5;
}
```
FILE: script.js
```javascript
const SVG_NS = "http://www.w3.org/2000/svg";

function add_spans (parent, texts) {
    for (const text of texts) {
        const span = document.createElement("span");
        span.textContent = text;
        parent.appendChild(span);
    }
}

function add_shape (svg, tag, cls, attrs) {
    const el = document.createElementNS(SVG_NS, tag);
    el.setAttribute("class", cls);
    for (const key in attrs) el.setAttribute(key, attrs[key]);
    svg.appendChild(el);
    return el;
}

// スペクトロメーターの目盛り
const freqs = [15, 20, 27, 35, 46, 59, 78, 103, 139, 188, 255, 345, 467, 632, 855, 1158, 1633, 2303, 3248, 4580, 6459, 9109, 12847, 18874];
document.querySelectorAll(".spectrum").forEach((el) => {
    const db = document.createElement("div");
    const grid = document.createElement("div");
    const labels = document.createElement("div");
    db.className = "spectrum-db";
    grid.className = "freq-grid";
    labels.className = "freq-labels";
    add_spans(db, ["0dB", "-19dB", "-38dB", "-57dB", "-76dB", "-95dB"]);
    add_spans(grid, freqs.map(() => ""));
    add_spans(labels, freqs.map((f) => f + " Hz"));
    el.append(db, grid, labels);
});

// レベルメーターの目盛り
const levels = [];
for (let v = -45; v <= 6; v += 3) levels.push(v > 0 ? "+" + v : String(v));
add_spans(document.querySelector(".level-numbers"), levels);
document.querySelectorAll(".dots").forEach((el) => add_spans(el, levels.map(() => "")));
add_spans(document.querySelector(".pan-numbers"), ["6", "5", "4", "3", "2", "1", "0 dB", "1", "2", "3", "4", "5", "6"]);

// 時間ルーラー
document.querySelectorAll(".ruler").forEach((el) => {
    const times = ["0 s"];
    for (let t = 50; t <= 800; t += 50) times.push(t + " ms");
    add_spans(el, times);
});

// 波形
const SEL_START = 250;
const SEL_END = 472.5;
const FILE_END = 701;

function make_random (seed) {
    return () => {
        seed = (seed * 1103515245 + 12345) % 2147483648;
        return seed / 2147483648;
    };
}

function make_samples (seed) {
    const rnd = make_random(seed);
    const out = [];
    for (let x = 0; x <= 744; x += 0.5) {
        let y = 0;
        if (x < 21) {
            y = (rnd() - 0.5) * 0.8;
        }
        else if (x < 625) {
            const fade = x > 590 ? (640 - x) / 50 : 1;
            const grow = Math.min(1, 0.7 + (x - 21) / 150);
            const carrier = Math.sin(x * 0.9) * 7 + Math.sin(x * 1.93 + seed) * 5 + Math.sin(x * 0.41) * 2;
            let noise = (rnd() - 0.5) * 16;
            if (rnd() > 0.95) noise *= 1.8;
            y = (carrier + noise) * fade * grow;
        }
        else if (x < 700) {
            const fade = Math.pow((700 - x) / 75, 1.5);
            y = Math.sin(x * 0.9) * 6 * fade + (rnd() - 0.5) * 2 * fade;
        }
        out.push([x, y]);
    }
    return out;
}

function draw_wave (svg, samples, center, scale, body) {
    const parts = [
        [0, SEL_START, "wave"],
        [SEL_START, SEL_END, "wave-sel"],
        [SEL_END, 744, "wave"]
    ];
    for (const [from, to, cls] of parts) {
        const pts = samples.filter(([x]) => x >= from && x <= to);
        const line = (k) => "M" + pts.map(([x, y]) => x + " " + (center - y * k).toFixed(1)).join("L");
        add_shape(svg, "path", cls, { d: line(scale) });
        if (body && cls === "wave") {
            const dense = pts.filter(([x]) => x > 21 && x < 640);
            const d = "M" + dense.map(([x, y]) => x + " " + (center - y * scale * 0.6).toFixed(1)).join("L");
            add_shape(svg, "path", "wave-body", { d: d });
        }
    }
}

const overview = document.getElementById("overview-wave");
add_shape(overview, "rect", "selection", { x: SEL_START, y: 0, width: SEL_END - SEL_START, height: 20 });
add_shape(overview, "line", "guide", { x1: 0, x2: 744, y1: 10, y2: 10 });
draw_wave(overview, make_samples(7), 5.5, 0.09, false);
draw_wave(overview, make_samples(19), 14.5, 0.09, false);
add_shape(overview, "line", "cursor", { x1: SEL_END, x2: SEL_END, y1: 0, y2: 20 });
add_shape(overview, "line", "file-end", { x1: FILE_END, x2: FILE_END, y1: 0, y2: 20 });

const main = document.getElementById("main-wave");
add_shape(main, "rect", "selection", { x: SEL_START, y: 0, width: SEL_END - SEL_START, height: 141 });
for (const y of [18.5, 51.5, 88.5, 121.5]) {
    add_shape(main, "line", "guide", { x1: 0, x2: 744, y1: y, y2: y });
}
add_shape(main, "line", "lane", { x1: 0, x2: 744, y1: 70, y2: 70 });
add_shape(main, "line", "lane lane-sel", { x1: SEL_START, x2: SEL_END, y1: 70, y2: 70 });
draw_wave(main, make_samples(7), 35, 1, true);
draw_wave(main, make_samples(19), 105, 1, true);
add_shape(main, "line", "cursor", { x1: SEL_END, x2: SEL_END, y1: 0, y2: 141 });
add_shape(main, "line", "file-end", { x1: FILE_END, x2: FILE_END, y1: 0, y2: 141 });
add_shape(main, "circle", "cursor-cap", { cx: SEL_END, cy: 1, r: 2 });
add_shape(main, "circle", "handle", { cx: SEL_END - 2, cy: 70, r: 1.5 });
add_shape(main, "circle", "handle", { cx: SEL_END + 4, cy: 70, r: 1.5 });

// フェーダーの目盛り
const fader = document.getElementById("fader-scale");
const marks = [["+6", 15], ["+3", 20], ["+1", 25], ["0", 32], ["-1", 39], ["-3", 44], ["-6", 49], ["-12", 56], ["-24", 67], ["-36", 75], ["-48", 82], ["-72", 93]];
for (const x of [52, 65]) add_shape(fader, "rect", "meter", { x: x, y: 9, width: 8, height: 93 });
for (const x of [29, 42]) add_shape(fader, "rect", "slit", { x: x, y: 9, width: 2, height: 93 });
for (const [text, y] of marks) {
    add_shape(fader, "text", "", { x: 20, y: y + 2, "text-anchor": "end" }).textContent = text;
    add_shape(fader, "text", "", { x: 81, y: y + 2 }).textContent = text;
    add_shape(fader, "path", "", { d: `M22 ${y + .5}h3M35 ${y + .5}h3M48 ${y + .5}h3M74 ${y + .5}h3` });
}
```
